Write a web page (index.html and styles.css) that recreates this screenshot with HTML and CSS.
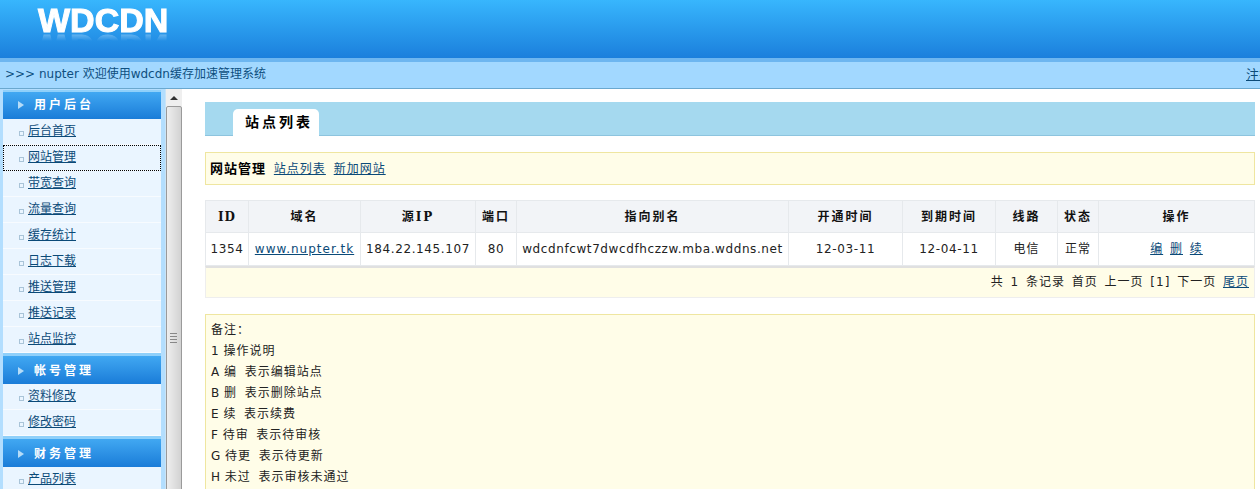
FILE: index.html
```html
<!DOCTYPE html>
<html lang="zh-CN">
<head>
	<meta charset="utf-8"/>
	<title>WDCDN</title>
	<link rel="stylesheet" href="styles.css">
</head>
<body>

<header class="top">
	<div class="logo">WDCDN</div>
</header>

<div class="welcome">
	<span>&gt;&gt;&gt; nupter 欢迎使用wdcdn缓存加速管理系统</span>
	<a href="#" class="logout">注销</a>
</div>

<div class="wrap">
	<aside class="side">
		<div class="menu_head first"><span class="arrow"></span>用户后台</div>
		<a href="#" class="menu_item">后台首页</a>
		<a href="#" class="menu_item current">网站管理</a>
		<a href="#" class="menu_item">带宽查询</a>
		<a href="#" class="menu_item">流量查询</a>
		<a href="#" class="menu_item">缓存统计</a>
		<a href="#" class="menu_item">日志下载</a>
		<a href="#" class="menu_item">推送管理</a>
		<a href="#" class="menu_item">推送记录</a>
		<a href="#" class="menu_item">站点监控</a>
		<div class="menu_head"><span class="arrow"></span>帐号管理</div>
		<a href="#" class="menu_item">资料修改</a>
		<a href="#" class="menu_item">修改密码</a>
		<div class="menu_head"><span class="arrow"></span>财务管理</div>
		<a href="#" class="menu_item">产品列表</a>
	</aside>

	<div class="scroll">
		<div class="scroll_btn"><span class="scroll_up"></span></div>
		<div class="scroll_thumb"><span class="grip"></span></div>
	</div>

	<main class="content">
		<div class="tab_bar"><div class="tab">站点列表</div></div>

		<div class="notice nav_box">
			<b>网站管理</b>
			<a href="#">站点列表</a>
			<a href="#">新加网站</a>
		</div>

		<table class="list">
			<tr>
				<th class="c_id">ID</th>
				<th class="c_domain">域名</th>
				<th class="c_ip">源IP</th>
				<th class="c_port">端口</th>
				<th class="c_alias">指向别名</th>
				<th class="c_date">开通时间</th>
				<th class="c_date2">到期时间</th>
				<th class="c_line">线路</th>
				<th class="c_state">状态</th>
				<th>操作</th>
			</tr>
			<tr>
				<td class="num">1354</td>
				<td><a href="#">www.nupter.tk</a></td>
				<td class="num">184.22.145.107</td>
				<td class="num">80</td>
				<td class="num">wdcdnfcwt7dwcdfhczzw.mba.wddns.net</td>
				<td class="num">12-03-11</td>
				<td class="num">12-04-11</td>
				<td>电信</td>
				<td>正常</td>
				<td class="ops"><a href="#">编</a> <a href="#">删</a> <a href="#">续</a></td>
			</tr>
		</table>
		<div class="pager">
			共 1 条记录 首页 上一页 [1] 下一页 <a href="#">尾页</a>
		</div>

		<div class="notice remark">
			<p>备注：</p>
			<p>1 操作说明</p>
			<p>A 编 &nbsp;表示编辑站点</p>
			<p>B 删 &nbsp;表示删除站点</p>
			<p>E 续 &nbsp;表示续费</p>
			<p>F 待审 &nbsp;表示待审核</p>
			<p>G 待更 &nbsp;表示待更新</p>
			<p>H 未过 &nbsp;表示审核未通过</p>
		</div>
	</main>
</div>

</body>
</html>
```

FILE: styles.css
```css
html, body {
	margin: 0;
	height: 489px;
	overflow: hidden;
}
body {
	background: #fff;
	color: #222;
	font: 12px/20px "DejaVu Sans", "Noto Sans CJK SC", sans-serif;
}
a {
	color: #0b4a78;
}

.top {
	height: 58px;
	background: linear-gradient(#38b6fd, #1b7fdc);
	overflow: hidden;
}
.logo {
	padding: 0 0 0 38px;
	color: #fff;
	font: bold 34px/40px "Liberation Sans", sans-serif;
	-webkit-text-stroke: 1px #fff;
	-webkit-box-reflect: below -13px linear-gradient(transparent 65%, rgba(255, 255, 255, 0.6));
}

.welcome {
	display: flex;
	justify-content: space-between;
	height: 26px;
	padding: 0 0 0 5px;
	border-top: 4px solid #6db6f0;
	border-bottom: 1px solid #6aa8cf;
	background: #a2d8ff;
	color: #0e4f80;
	line-height: 25px;
	white-space: nowrap;
}
.logout {
	width: 14px;
	overflow: hidden;
	font-size: 13px;
}

.wrap {
	display: flex;
	height: 400px;
}

.side {
	width: 158px;
	padding: 1px 4px 0 3px;
	background: #b3defe;
	flex: none;
}
.menu_head {
	height: 31px;
	line-height: 30px;
	padding-left: 15px;
	border-top: 3px solid #8fd0fa;
	box-sizing: border-box;
	background: linear-gradient(#41a8f2, #1a7cd8);
	color: #fff;
	font-weight: bold;
	letter-spacing: 3px;
}
.menu_head.first {
	height: 29px;
	line-height: 26px;
	border-top-width: 2px;
}
.arrow {
	display: inline-block;
	width: 0;
	height: 0;
	margin-right: 10px;
	border-left: 6px solid #b5dcf8;
	border-top: 4px solid transparent;
	border-bottom: 4px solid transparent;
}
.menu_item {
	display: block;
	height: 26px;
	box-sizing: border-box;
	padding-left: 25px;
	line-height: 25px;
	background: #eaf5ff;
	border-bottom: 1px solid #f7fbff;
	position: relative;
}
.menu_item::before {
	content: "";
	position: absolute;
	left: 16px;
	top: 12px;
	width: 3px;
	height: 3px;
	border: 1px solid #a9c4d8;
}
.menu_item.current {
	outline: 1px dotted #000;
	outline-offset: -1px;
}

.scroll {
	width: 16px;
	margin-right: 1px;
	background: #f2f2f0;
	border-left: 1px solid #c9e4f8;
	flex: none;
}
.scroll_btn {
	height: 17px;
	background: #efefef;
	display: flex;
	align-items: center;
	justify-content: center;
}
.scroll_up {
	width: 0;
	height: 0;
	border-left: 4px solid transparent;
	border-right: 4px solid transparent;
	border-bottom: 4px solid #333;
}
.scroll_thumb {
	height: 475px;
	box-sizing: border-box;
	background: linear-gradient(90deg, #eee, #d2d2d2);
	border: 1px solid #9a9a9a;
	border-radius: 2px;
	position: relative;
}
.grip {
	position: absolute;
	left: 3px;
	top: 226px;
	width: 7px;
	height: 10px;
	background: repeating-linear-gradient(#888 0 1px, transparent 1px 3px);
}

.content {
	flex: 1;
	min-width: 0;
	padding: 13px 5px 0 22px;
	letter-spacing: 1px;
}
.tab_bar {
	height: 34px;
	padding: 7px 0 0 28px;
	box-sizing: border-box;
	background: #a5d9ef;
	border-bottom: 1px solid #8dc4de;
}
.tab {
	display: inline-block;
	height: 28px;
	padding: 0 6px 0 12px;
	background: #fff;
	border-radius: 5px 5px 0 0;
	font-size: 14px;
	font-weight: bold;
	line-height: 26px;
	letter-spacing: 3px;
	color: #000;
}
.notice {
	background: #fffde8;
	border: 1px solid #efe6a0;
}
.nav_box {
	margin-top: 16px;
	height: 31px;
	padding-left: 4px;
	line-height: 31px;
}
.nav_box b {
	font-size: 13px;
	color: #000;
}
.nav_box a {
	margin-left: 3px;
}
.list {
	width: 100%;
	margin-top: 15px;
	border-collapse: collapse;
	table-layout: fixed;
	text-align: center;
}
.list th, .list td {
	border: 1px solid #e6e9ec;
	padding: 0;
	white-space: nowrap;
	overflow: hidden;
}
.list th {
	height: 31px;
	background: #f2f4f7;
	color: #111;
	font-family: "DejaVu Serif", "Noto Sans CJK SC", serif;
	letter-spacing: 2px;
}
.list td {
	height: 32px;
}
.list .num {
	letter-spacing: 0.6px;
}
.list .c_id {
	letter-spacing: 1px;
}
.c_id { width: 42px; }
.c_domain { width: 111px; }
.c_ip { width: 114px; }
.c_port { width: 40px; }
.c_alias { width: 271px; }
.c_date { width: 113px; }
.c_date2 { width: 92px; }
.c_line { width: 61px; }
.c_state { width: 40px; }
.ops a {
	margin: 0 1px;
}
.pager {
	height: 32px;
	padding-right: 5px;
	background: #fffde8;
	border: 1px solid #eee;
	border-top: 2px solid #e0e0e0;
	box-sizing: border-box;
	line-height: 28px;
	text-align: right;
	word-spacing: 2px;
}
.remark {
	margin-top: 16px;
	padding: 5px 5px 0 5px;
	height: 300px;
}
.remark p {
	margin: 0;
	height: 21px;
	line-height: 21px;
	word-spacing: -1px;
}
```
